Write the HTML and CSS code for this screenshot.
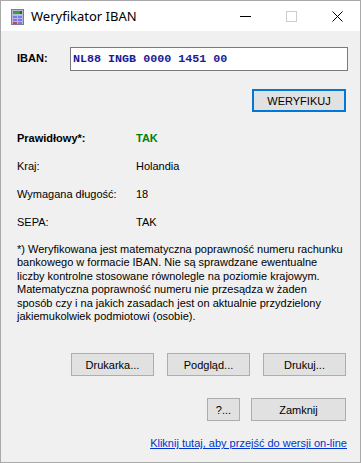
FILE: index.html
```html
<!DOCTYPE html>
<html lang="pl">
<head>
    <meta charset="UTF-8">
    <title>Weryfikator IBAN</title>
    <link rel="stylesheet" href="styles.css">
</head>
<body>
    <div class="window">
        <div class="title-bar">
            <svg class="app-icon" width="13" height="16" viewBox="0 0 13 16">
                <rect x="0.5" y="0.5" width="12" height="15" fill="#b8b8d8" stroke="#7a7a9a"/>
                <rect x="2" y="2" width="9" height="3" fill="#2ea82e"/>
                <rect x="9" y="2" width="2" height="3" fill="#1c6e1c"/>
                <rect x="2" y="7" width="4" height="2" fill="#7878f0"/>
                <rect x="7" y="7" width="4" height="2" fill="#7878f0"/>
                <rect x="2" y="10" width="4" height="2" fill="#7878f0"/>
                <rect x="7" y="10" width="4" height="2" fill="#7878f0"/>
                <rect x="2" y="13" width="4" height="2" fill="#e03a3a"/>
                <rect x="7" y="13" width="4" height="2" fill="#7878f0"/>
            </svg>
            <span class="title">Weryfikator IBAN</span>
            <div class="controls">
                <span class="ctrl min"><svg width="11" height="11" viewBox="0 0 11 11"><line x1="0" y1="5.5" x2="11" y2="5.5" stroke="#000"/></svg></span>
                <span class="ctrl max"><svg width="11" height="11" viewBox="0 0 11 11"><rect x="0.5" y="0.5" width="10" height="10" fill="none" stroke="#cccccc"/></svg></span>
                <span class="ctrl close"><svg width="11" height="11" viewBox="0 0 11 11"><path d="M0.5 0.5 L10.5 10.5 M10.5 0.5 L0.5 10.5" stroke="#000" fill="none"/></svg></span>
            </div>
        </div>

        <div class="content">
            <div class="iban-row">
                <label class="iban-label" for="iban">IBAN:</label>
                <div class="iban-input" id="iban">NL88 INGB 0000 1451 00</div>
            </div>

            <div class="verify-row">
                <button type="button" class="btn btn-default verify-btn">WERYFIKUJ</button>
            </div>

            <div class="results">
                <div class="result-row">
                    <span class="result-label bold">Prawidłowy*:</span>
                    <span class="result-value bold ok">TAK</span>
                </div>
                <div class="result-row">
                    <span class="result-label">Kraj:</span>
                    <span class="result-value">Holandia</span>
                </div>
                <div class="result-row">
                    <span class="result-label">Wymagana długość:</span>
                    <span class="result-value">18</span>
                </div>
                <div class="result-row">
                    <span class="result-label">SEPA:</span>
                    <span class="result-value">TAK</span>
                </div>
            </div>

            <p class="note">
                *) Weryfikowana jest matematyczna poprawność numeru rachunku<br>
                bankowego w formacie IBAN. Nie są sprawdzane ewentualne<br>
                liczby kontrolne stosowane równolegle na poziomie krajowym.<br>
                Matematyczna poprawność numeru nie przesądza w żaden<br>
                sposób czy i na jakich zasadach jest on aktualnie przydzielony<br>
                jakiemukolwiek podmiotowi (osobie).
            </p>

            <div class="print-row">
                <button type="button" class="btn print-btn">Drukarka...</button>
                <button type="button" class="btn print-btn">Podgląd...</button>
                <button type="button" class="btn print-btn">Drukuj...</button>
            </div>

            <div class="close-row">
                <button type="button" class="btn help-btn">?...</button>
                <button type="button" class="btn close-btn">Zamknij</button>
            </div>

            <div class="link-row">
                <a href="#" class="online-link">Kliknij tutaj, aby przejść do wersji on-line</a>
            </div>
        </div>
    </div>
</body>
</html>
```

FILE: styles.css
```css
body {
    margin: 0;
    padding: 0;
    background: #ffffff;
    font-family: "Liberation Sans", Arial, sans-serif;
    font-size: 11px;
    color: #000;
}

.window {
    width: 361px;
    height: 463px;
    box-sizing: border-box;
    border: 1px solid #a9a9a9;
    background: #f0f0f0;
    display: flex;
    flex-direction: column;
}

.title-bar {
    height: 30px;
    background: #ffffff;
    display: flex;
    align-items: center;
    padding-left: 10px;
}

.app-icon {
    display: block;
    margin-top: 1px;
}

.title {
    font-family: "Noto Sans", "Open Sans", sans-serif;
    font-size: 13px;
    margin-left: 7px;
    margin-top: -1px;
}

.controls {
    margin-left: auto;
    display: flex;
    height: 100%;
}

.ctrl {
    width: 46px;
    display: flex;
    align-items: center;
    justify-content: center;
}

.content {
    flex: 1;
    padding: 16px 13px 0 16px;
    display: flex;
    flex-direction: column;
}

.iban-row {
    display: flex;
    align-items: center;
}

.iban-label {
    font-weight: bold;
    width: 53px;
    margin-top: -2px;
}

.iban-input {
    flex: 1;
    height: 24px;
    box-sizing: border-box;
    border: 1px solid #7a7a7a;
    background: #fff;
    font-family: "Liberation Mono", "Courier New", monospace;
    font-weight: bold;
    font-size: 11.7px;
    color: #1a1a96;
    line-height: 22px;
    padding-left: 2px;
    white-space: pre;
    margin-right: -1px;
}

.verify-row {
    display: flex;
    justify-content: flex-end;
    margin-top: 18px;
    padding-right: 1px;
}

.btn {
    font-family: "Liberation Sans", Arial, sans-serif;
    font-size: 11px;
    color: #000;
    background: #e1e1e1;
    border: 1px solid #adadad;
    height: 23px;
    padding: 0;
    box-sizing: border-box;
}

.btn-default {
    border: 2px solid #0078d7;
}

.verify-btn {
    width: 94px;
}

.results {
    margin-top: 12px;
}

.result-row {
    display: flex;
    height: 28px;
    align-items: center;
}

.result-label {
    width: 119px;
}

.bold {
    font-weight: bold;
}

.ok {
    color: #008000;
}

.note {
    margin: 7px 0 0 0;
    line-height: 13.4px;
    white-space: nowrap;
}

.print-row {
    display: flex;
    justify-content: flex-end;
    gap: 13px;
    margin-top: 30px;
    padding-right: 1px;
}

.print-btn {
    width: 83px;
}

.close-row {
    display: flex;
    justify-content: flex-end;
    gap: 11px;
    margin-top: 22px;
    padding-right: 1px;
}

.help-btn {
    width: 33px;
}

.close-btn {
    width: 95px;
}

.link-row {
    display: flex;
    justify-content: flex-end;
    margin-top: 16px;
}

.online-link {
    color: #0033cc;
    text-decoration: underline;
}
```
